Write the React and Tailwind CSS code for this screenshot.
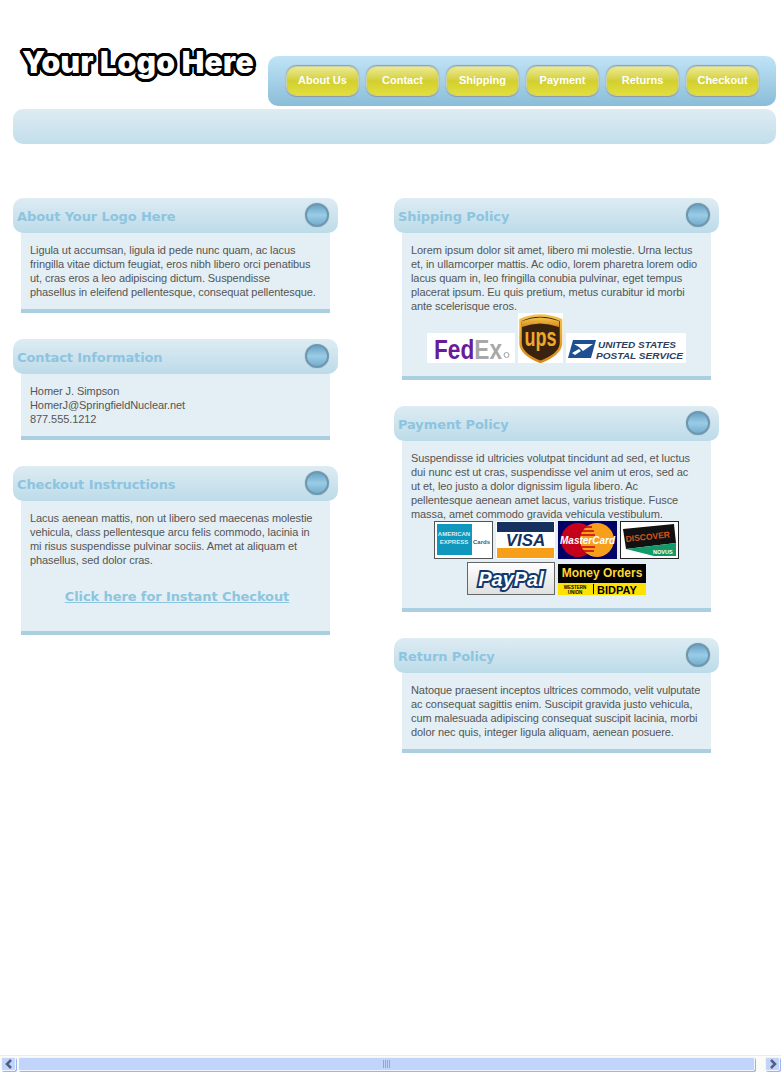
const sans = "font-['Liberation_Sans',Arial,sans-serif]";

function Ball() {
  return (
    <span className="-mt-[1px] w-[24px] h-[24px] rounded-full border-2 border-[#6f97ad] bg-gradient-to-b from-[#6aa3c6] via-[#9accE6] to-[#74aece] shadow-[0_0_1px_#6b8c9f]" />
  );
}

function Panel({ title, children, pad = "pb-[10px]" }) {
  return (
    <section className="flex flex-col">
      <header className="h-[35px] w-[325px] rounded-[10px] flex items-center justify-between pl-[4px] pr-[9px] bg-gradient-to-b from-[#deecf3] to-[#bcdbe9]">
        <h2 className="pt-[2px] font-['DejaVu_Sans',Verdana,sans-serif] font-bold text-[13px] tracking-[-0.1px] text-[#8dc4df]">{title}</h2>
        <Ball />
      </header>
      <div className={`ml-[8px] w-[309px] bg-[#e3eff4] border-b-4 border-[#a9cfe0] pt-[10px] px-[9px] ${pad}`}>
        {children}
      </div>
    </section>
  );
}

function Body({ lines }) {
  return (
    <p className="text-[11px] leading-[14px] tracking-[-0.08px] text-[#555555] whitespace-nowrap">
      {lines.map((l) => (
        <span key={l} className="block">{l}</span>
      ))}
    </p>
  );
}

function FedEx() {
  return (
    <svg width="88" height="30" viewBox="0 0 88 30" className="bg-white">
      <g transform="translate(7 26) scale(0.84 1)" fontFamily="Liberation Sans" fontWeight="700" fontSize="27">
        <text x="0" fill="#6a1b9a">Fed</text>
        <text x="48" fill="#a8a8a8">Ex</text>
      </g>
      <circle cx="79.5" cy="22" r="2.5" fill="none" stroke="#a0a0a0" />
    </svg>
  );
}

function Ups() {
  return (
    <svg width="45" height="50" viewBox="0 0 45 50" className="bg-white">
      <defs>
        <linearGradient id="upsg" x1="0" y1="0" x2="0" y2="1">
          <stop offset="0" stopColor="#f2c14e" />
          <stop offset="1" stopColor="#d98a12" />
        </linearGradient>
      </defs>
      <path d="M2.5 7 Q22 -2 43 7 V30 Q43 41 22.5 49 Q2.5 41 2.5 30 Z" fill="#3a2210" stroke="url(#upsg)" strokeWidth="2.5" />
      <path d="M4 8 Q22 1 41 8 V14 Q22 7 4 14 Z" fill="url(#upsg)" />
      <g transform="translate(22.5 33) scale(1 1.45)">
        <text textAnchor="middle" fontFamily="Liberation Sans" fontWeight="700" fontSize="18" fill="#f0a92a">ups</text>
      </g>
    </svg>
  );
}

function Usps() {
  return (
    <svg width="120" height="30" viewBox="0 0 120 30" className="bg-white">
      <path d="M7 7 H30 L25 25 H2 Z" fill="#1d4f91" />
      <path d="M8 11 H27 L17 18 L13 14 Z" fill="#ffffff" />
      <path d="M6 20 L13 16 L15 18 L9 22 Z" fill="#ffffff" />
      <text x="32" y="15" fontFamily="Liberation Sans" fontWeight="700" fontStyle="italic" fontSize="9.5" fill="#2c3e63" textLength="78" lengthAdjust="spacingAndGlyphs">UNITED STATES</text>
      <text x="30" y="26" fontFamily="Liberation Sans" fontWeight="700" fontStyle="italic" fontSize="9.5" fill="#2c3e63" textLength="87" lengthAdjust="spacingAndGlyphs">POSTAL SERVICE</text>
    </svg>
  );
}

function Amex() {
  return (
    <svg width="59" height="38" viewBox="0 0 59 38">
      <rect x="0.5" y="0.5" width="58" height="37" fill="#fff" stroke="#555" />
      <rect x="3" y="3" width="35" height="31" fill="#0f97bd" />
      <text x="20" y="15" textAnchor="middle" fontFamily="Liberation Sans" fontWeight="700" fontSize="6" fill="#d8eef5">AMERICAN</text>
      <text x="20" y="23" textAnchor="middle" fontFamily="Liberation Sans" fontWeight="700" fontSize="6" fill="#d8eef5">EXPRESS</text>
      <text x="39" y="23" fontFamily="Liberation Sans" fontWeight="700" fontSize="6" fill="#555">Cards</text>
    </svg>
  );
}

function Visa() {
  return (
    <svg width="59" height="38" viewBox="0 0 59 38">
      <rect width="59" height="38" fill="#fff" />
      <rect x="1" y="1" width="57" height="10" fill="#16315f" />
      <rect x="1" y="27" width="57" height="10" fill="#f79f1a" />
      <text x="29.5" y="25" textAnchor="middle" fontFamily="Liberation Sans" fontWeight="700" fontStyle="italic" fontSize="17" fill="#16315f">VISA</text>
    </svg>
  );
}

function MasterCard() {
  return (
    <svg width="59" height="38" viewBox="0 0 59 38">
      <rect width="59" height="38" fill="#000066" />
      <circle cx="20" cy="19" r="17" fill="#c4001a" />
      <circle cx="39" cy="19" r="17" fill="#f79e1b" />
      <path d="M25 6H34M23 10H36M22 14H37M22 26H37M23 30H36" stroke="#c4001a" strokeWidth="1.5" />
      <text x="29.5" y="23" textAnchor="middle" fontFamily="Liberation Sans" fontWeight="700" fontStyle="italic" fontSize="10" fill="#ffffff">MasterCard</text>
    </svg>
  );
}

function Discover() {
  return (
    <svg width="59" height="38" viewBox="0 0 59 38">
      <rect x="0.5" y="0.5" width="58" height="37" fill="#fff" stroke="#222" />
      <path d="M3 8 L54 3 L56 22 L6 28 Z" fill="#111" />
      <path d="M6 28 L56 22 V35 H34 Z" fill="#0f9a68" />
      <text x="6" y="21" fontFamily="Liberation Sans" fontWeight="700" fontSize="8.5" fill="#d9531e" transform="rotate(-6 6 21)">DISCOVER</text>
      <text x="33" y="33" fontFamily="Liberation Sans" fontWeight="700" fontSize="5.5" fill="#fff">NOVUS</text>
    </svg>
  );
}

function PayPal() {
  return (
    <svg width="88" height="33" viewBox="0 0 88 33">
      <defs>
        <linearGradient id="pp" x1="0" y1="0" x2="0" y2="1">
          <stop offset="0" stopColor="#ffffff" />
          <stop offset="1" stopColor="#e0e0e0" />
        </linearGradient>
      </defs>
      <rect x="0.5" y="0.5" width="87" height="32" fill="url(#pp)" stroke="#666" />
      <text x="44" y="24" textAnchor="middle" fontFamily="Liberation Sans" fontWeight="700" fontStyle="italic" fontSize="20" fill="#ffffff" stroke="#14386e" strokeWidth="4" paintOrder="stroke">PayPal</text>
    </svg>
  );
}

function MoneyOrders() {
  return (
    <svg width="88" height="31" viewBox="0 0 88 31">
      <rect width="88" height="31" fill="#000" />
      <rect y="19" width="88" height="12" fill="#ffe100" />
      <text x="44" y="13" textAnchor="middle" fontFamily="Liberation Sans" fontWeight="700" fontSize="12" fill="#ffd633">Money Orders</text>
      <text x="17" y="25" textAnchor="middle" fontFamily="Liberation Sans" fontWeight="700" fontSize="4.5" fill="#000">WESTERN</text>
      <text x="17" y="30" textAnchor="middle" fontFamily="Liberation Sans" fontWeight="700" fontSize="4.5" fill="#000">UNION</text>
      <path d="M35.5 20V30" stroke="#000" />
      <text x="39" y="29.5" fontFamily="Liberation Sans" fontWeight="700" fontSize="11" fill="#000">BIDPAY</text>
    </svg>
  );
}

const barPiece = "h-[14px] rounded-[2px] bg-[#c3d4fb] border border-[#f0f4fe] shadow-[1px_1px_0_#9db4ea] flex items-center justify-center";

function Scrollbar() {
  return (
    <div className="h-[17px] bg-[#fbfbf8] border-t border-[#eeede5] flex items-start gap-[2px] px-[1px] pt-[1px]">
      <button className={`w-[15px] ${barPiece}`}>
        <svg width="8" height="10" viewBox="0 0 8 10"><path d="M6 1 L2 5 L6 9" fill="none" stroke="#4d6185" strokeWidth="2.5" /></svg>
      </button>
      <div className={`flex-1 ${barPiece}`}>
        <svg width="8" height="8" viewBox="0 0 8 8" className="text-[#8ea6e0]"><path d="M.5 0V8M2.5 0V8M4.5 0V8M6.5 0V8" stroke="currentColor" /></svg>
      </div>
      <div className="w-[6px]" />
      <button className={`w-[15px] ${barPiece}`}>
        <svg width="8" height="10" viewBox="0 0 8 10"><path d="M2 1 L6 5 L2 9" fill="none" stroke="#4d6185" strokeWidth="2.5" /></svg>
      </button>
    </div>
  );
}

const nav = ["About Us", "Contact", "Shipping", "Payment", "Returns", "Checkout"];

export default function App() {
  return (
    <div className={`h-[1072px] flex flex-col bg-white overflow-hidden ${sans}`}>
      <main className="flex-1 pl-[13px]">
        <div className="flex w-[763px] pt-[45px] h-[109px] gap-[8px]">
          <div className="w-[247px] h-[36px] pl-[9px] font-['Inter',sans-serif] font-black text-[30px] leading-[34px] tracking-[0.35px] text-white whitespace-nowrap [text-shadow:3px_0_0_#000,-3px_0_0_#000,0_3px_0_#000,0_-3px_0_#000,2px_2px_0_#000,-2px_2px_0_#000,2px_-2px_0_#000,-2px_-2px_0_#000,3px_1px_0_#000,-3px_1px_0_#000,3px_-1px_0_#000,-3px_-1px_0_#000,1px_3px_0_#000,-1px_3px_0_#000,1px_-3px_0_#000,-1px_-3px_0_#000]">
            Your Logo Here
          </div>
          <nav className="mt-[11px] w-[508px] h-[50px] rounded-[10px] bg-gradient-to-b from-[#c0e4f7] to-[#8abdd8] flex items-center pl-[19px] gap-[9px]">
            {nav.map((n) => (
              <a key={n} className="w-[71px] h-[28px] pb-[2px] rounded-[9px] bg-gradient-to-b from-[#ecea8e] via-[#d2cf30] to-[#e2de3e] shadow-[0_0_0_1px_#c9cfa8,0_-1px_1px_1px_#8fa0ad,0_1px_1px_1px_#8e9aa3] flex items-center justify-center text-[11px] font-bold text-white">
                {n}
              </a>
            ))}
          </nav>
        </div>
        <div className="w-[763px] h-[35px] rounded-[10px] bg-gradient-to-b from-[#deecf3] to-[#c2deeb]" />
        <div className="flex gap-[56px] mt-[54px]">
          <div className="flex flex-col gap-[26px]">
            <Panel title="About Your Logo Here">
              <Body lines={[
                "Ligula ut accumsan, ligula id pede nunc quam, ac lacus",
                "fringilla vitae dictum feugiat, eros nibh libero orci penatibus",
                "ut, cras eros a leo adipiscing dictum. Suspendisse",
                "phasellus in eleifend pellentesque, consequat pellentesque.",
              ]} />
            </Panel>
            <Panel title="Contact Information">
              <Body lines={["Homer J. Simpson", "HomerJ@SpringfieldNuclear.net", "877.555.1212"]} />
            </Panel>
            <Panel title="Checkout Instructions" pad="pb-[23px]">
              <Body lines={[
                "Lacus aenean mattis, non ut libero sed maecenas molestie",
                "vehicula, class pellentesque arcu felis commodo, lacinia in",
                "mi risus suspendisse pulvinar sociis. Amet at aliquam et",
                "phasellus, sed dolor cras.",
              ]} />
              <div className="mt-[17px] pl-[3px] text-center">
                <a className="font-['DejaVu_Sans',Verdana,sans-serif] font-bold text-[13px] tracking-[-0.1px] underline text-[#8dc4df]">Click here for Instant Checkout</a>
              </div>
            </Panel>
          </div>
          <div className="flex flex-col gap-[26px]">
            <Panel title="Shipping Policy" pad="pb-[13px]">
              <Body lines={[
                "Lorem ipsum dolor sit amet, libero mi molestie. Urna lectus",
                "et, in ullamcorper mattis. Ac odio, lorem pharetra lorem odio",
                "lacus quam in, leo fringilla conubia pulvinar, eget tempus",
                "placerat ipsum. Eu quis pretium, metus curabitur id morbi",
                "ante scelerisque eros.",
              ]} />
              <div className="flex justify-center items-end gap-[3px]">
                <FedEx /><Ups /><Usps />
              </div>
            </Panel>
            <Panel title="Payment Policy" pad="pb-[13px]">
              <Body lines={[
                "Suspendisse id ultricies volutpat tincidunt ad sed, et luctus",
                "dui nunc est ut cras, suspendisse vel anim ut eros, sed ac",
                "ut et, leo justo a dolor dignissim ligula libero. Ac",
                "pellentesque aenean amet lacus, varius tristique. Fusce",
                "massa, amet commodo gravida vehicula vestibulum.",
              ]} />
              <div className="flex justify-center gap-[3px]">
                <Amex /><Visa /><MasterCard /><Discover />
              </div>
              <div className="flex justify-center items-end gap-[3px] mt-[3px]">
                <PayPal /><MoneyOrders />
              </div>
            </Panel>
            <Panel title="Return Policy">
              <Body lines={[
                "Natoque praesent inceptos ultrices commodo, velit vulputate",
                "ac consequat sagittis enim. Suscipit gravida justo vehicula,",
                "cum malesuada adipiscing consequat suscipit lacinia, morbi",
                "dolor nec quis, integer ligula aliquam, aenean posuere.",
              ]} />
            </Panel>
          </div>
        </div>
      </main>
      <Scrollbar />
    </div>
  );
}
